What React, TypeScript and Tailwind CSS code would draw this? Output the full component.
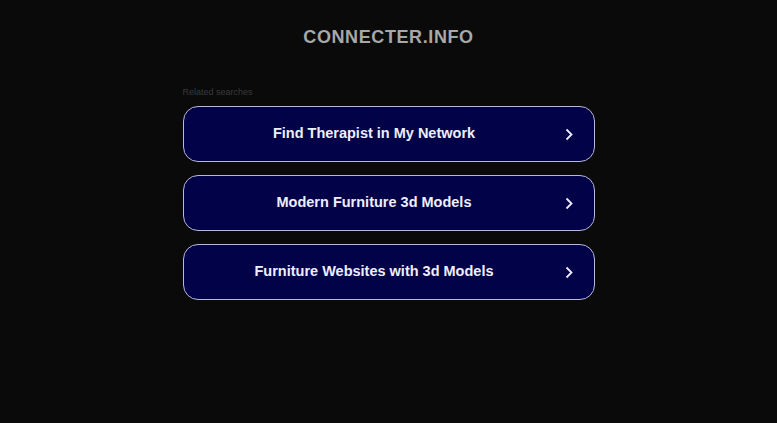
import React from "react";

const items = [
  "Find Therapist in My Network",
  "Modern Furniture 3d Models",
  "Furniture Websites with 3d Models",
];

export default function App() {
  return (
    <div
      className="min-h-[423px] w-full bg-[#0a0a0a] flex flex-col items-center"
      style={{ fontFamily: '"Liberation Sans", Arial, sans-serif' }}
    >
      <h1 className="mt-[26px] text-[18px] leading-[22px] font-bold tracking-[0.6px] text-[#a8a8a8]">
        CONNECTER.INFO
      </h1>
      <div className="mt-[38px] w-[412px] flex flex-col">
        <div className="text-[9px] leading-[12px] text-[#3a3a3a] mb-[8px]">Related searches</div>
        <div className="flex flex-col gap-[13px]">
          {items.map((t) => (
            <div
              key={t}
              className="h-[56px] rounded-[15px] border border-[#b8b8d8] bg-[#020248] flex items-center pl-[20px] pr-[21px]"
            >
              <span className="flex-1 text-center text-[14.5px] font-bold text-[#eeeeff]">{t}</span>
              <svg width="8" height="13" viewBox="0 0 8 13" fill="none" className="ml-[20px]">
                <path d="M1.5 1.5L6.5 6.5L1.5 11.5" stroke="#eeeeff" strokeWidth="1.8" />
              </svg>
            </div>
          ))}
        </div>
      </div>
    </div>
  );
}
